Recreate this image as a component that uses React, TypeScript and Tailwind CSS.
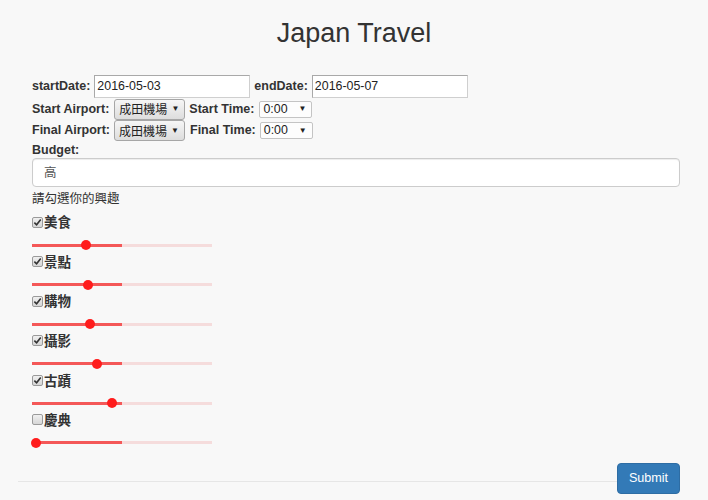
import React from 'react';

const interests = [
  { name: '美食', checked: true, thumb: 53.5 },
  { name: '景點', checked: true, thumb: 56.3 },
  { name: '購物', checked: true, thumb: 58 },
  { name: '攝影', checked: true, thumb: 65.3 },
  { name: '古蹟', checked: true, thumb: 80.3 },
  { name: '慶典', checked: false, thumb: 3.7 },
];

function DateInput({ value }: { value: string }) {
  return (
    <div className="flex h-[23px] w-[156px] items-center border border-[#a9a9a9] border-b-[#cfcfcf] border-r-[#cfcfcf] bg-white pl-[2px] text-[12.4px] font-normal text-[#222]">
      {value}
    </div>
  );
}

function AirportSelect() {
  return (
    <div className="flex h-[21px] w-[71px] items-center justify-between rounded-[3px] border border-[#a6a6a6] bg-gradient-to-b from-[#f6f6f6] to-[#dddddd] pl-[4px] pr-[5px] text-[12px] font-normal text-[#222]">
      <span className="font-['Noto_Sans_CJK_TC',sans-serif] leading-none">成田機場</span>
      <span className="text-[8px] leading-none">▼</span>
    </div>
  );
}

function TimeSelect() {
  return (
    <div className="flex h-[17px] w-[53px] items-center justify-between rounded-[2px] border border-[#c4c4c4] bg-[#fdfdfd] pl-[3px] pr-[5px] text-[12.4px] font-normal text-[#222]">
      <span className="leading-none">0:00</span>
      <span className="text-[8px] leading-none">▼</span>
    </div>
  );
}

function CheckBox({ checked }: { checked: boolean }) {
  return (
    <span className="flex h-[11px] w-[11px] items-center justify-center rounded-[2px] border border-[#9a9a9a] bg-gradient-to-b from-[#f0f0f0] to-[#d6d6d6]">
      {checked && (
        <svg viewBox="0 0 10 10" className="h-[9px] w-[9px]">
          <path d="M1.5 5.2 L4 7.6 L8.6 1.8" fill="none" stroke="#333" strokeWidth="1.8" />
        </svg>
      )}
    </span>
  );
}

function Slider({ thumb }: { thumb: number }) {
  return (
    <div className="relative h-[10px] w-[180px]">
      <div className="absolute left-0 top-[3.5px] h-[3px] w-[180px] bg-[#f5dcdc]" />
      <div className="absolute left-0 top-[3.5px] h-[3px] w-[90px] bg-[#f45858]" />
      <div
        className="absolute top-0 h-[10px] w-[10px] rounded-full bg-[#ff1c1c]"
        style={{ left: thumb - 5 }}
      />
    </div>
  );
}

export default function App() {
  return (
    <div className="min-h-[500px] w-full bg-[#f8f8f8] font-['Liberation_Sans','Noto_Sans_CJK_TC',sans-serif] text-[12.5px] text-[#333]">
      <h1 className="pt-[18px] text-center text-[27px] leading-[30px] font-normal">Japan Travel</h1>

      <div className="mt-[27px] px-[32px]">
        <div className="flex h-[23px] items-center font-bold">
          <span className="mr-[4px]">startDate:</span>
          <DateInput value="2016-05-03" />
          <span className="ml-[4px] mr-[4px]">endDate:</span>
          <DateInput value="2016-05-07" />
        </div>
        <div className="flex h-[22px] items-center font-bold">
          <span className="mr-[5px]">Start Airport:</span>
          <AirportSelect />
          <span className="ml-[4px] mr-[5px]">Start Time:</span>
          <TimeSelect />
        </div>
        <div className="flex h-[21px] items-center font-bold">
          <span className="mr-[4px]">Final Airport:</span>
          <AirportSelect />
          <span className="ml-[5px] mr-[4px]">Final Time:</span>
          <TimeSelect />
        </div>

        <div className="h-[17px] font-bold leading-[18px]">Budget:</div>
        <div className="flex h-[29px] w-[648px] items-center rounded-[4px] border border-[#cccccc] bg-white pl-[11px] font-['Noto_Sans_CJK_TC',sans-serif] text-[12.5px] text-[#555] shadow-[inset_0_1px_1px_rgba(0,0,0,0.075)]">
          高
        </div>

        <div className="mt-[2px] h-[18px] font-['Noto_Sans_CJK_TC',sans-serif] text-[12.5px] leading-[18px]">請勾選你的興趣</div>

        <div className="mt-[6px] flex flex-col">
          {interests.map((it) => (
            <div key={it.name} className="h-[39.6px]">
              <div className="flex h-[18px] items-center">
                <CheckBox checked={it.checked} />
                <span className="ml-[1px] font-['Noto_Sans_CJK_TC',sans-serif] text-[13.5px] font-bold leading-none">
                  {it.name}
                </span>
              </div>
              <div className="mt-[9px]">
                <Slider thumb={it.thumb} />
              </div>
            </div>
          ))}
        </div>
      </div>

      <div className="mt-[12.4px] flex items-end pl-[18px] pr-[28px]">
        <div className="mb-[12px] h-px flex-1 bg-[#e6e6e6]" />
        <button className="h-[31px] w-[63px] rounded-[4px] border border-[#2e6da4] bg-[#337ab7] text-[12.6px] text-white">
          Submit
        </button>
      </div>
    </div>
  );
}
